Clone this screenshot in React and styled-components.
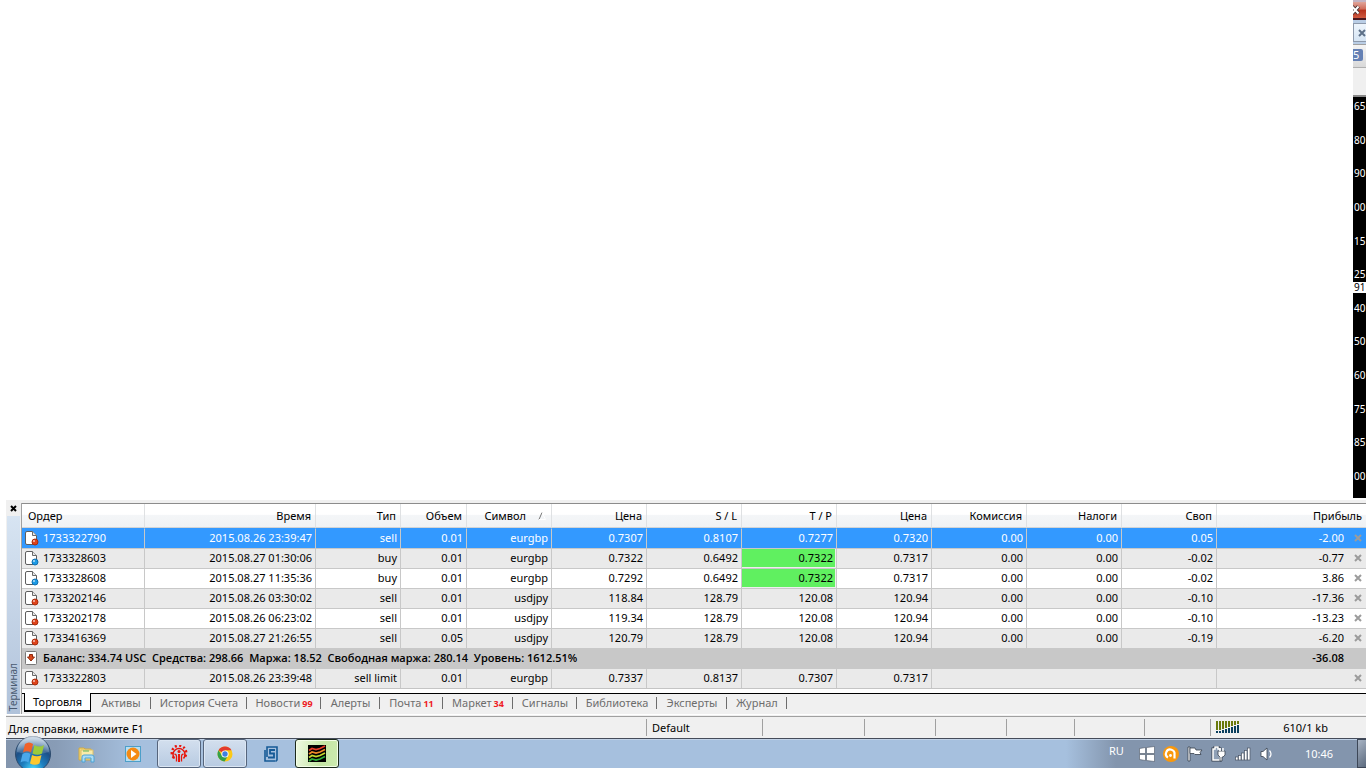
import React, { useState } from "react";
import styled, { createGlobalStyle } from "styled-components";

const columnas = [
  { titulo: "Ордер", ancho: 123 },
  { titulo: "Время", ancho: 171 },
  { titulo: "Тип", ancho: 85 },
  { titulo: "Объем", ancho: 66 },
  { titulo: "Символ", ancho: 85, orden: true },
  { titulo: "Цена", ancho: 95 },
  { titulo: "S / L", ancho: 95 },
  { titulo: "T / P", ancho: 95 },
  { titulo: "Цена", ancho: 95 },
  { titulo: "Комиссия", ancho: 95 },
  { titulo: "Налоги", ancho: 95 },
  { titulo: "Своп", ancho: 95 },
  { titulo: "Прибыль" },
];

const ordenes = [
  ["1733322790", "2015.08.26 23:39:47", "sell", "0.01", "eurgbp", "0.7307", "0.8107", "0.7277", "0.7320", "0.00", "0.00", "0.05", "-2.00"],
  ["1733328603", "2015.08.27 01:30:06", "buy", "0.01", "eurgbp", "0.7322", "0.6492", "0.7322", "0.7317", "0.00", "0.00", "-0.02", "-0.77"],
  ["1733328608", "2015.08.27 11:35:36", "buy", "0.01", "eurgbp", "0.7292", "0.6492", "0.7322", "0.7317", "0.00", "0.00", "-0.02", "3.86"],
  ["1733202146", "2015.08.26 03:30:02", "sell", "0.01", "usdjpy", "118.84", "128.79", "120.08", "120.94", "0.00", "0.00", "-0.10", "-17.36"],
  ["1733202178", "2015.08.26 06:23:02", "sell", "0.01", "usdjpy", "119.34", "128.79", "120.08", "120.94", "0.00", "0.00", "-0.10", "-13.23"],
  ["1733416369", "2015.08.27 21:26:55", "sell", "0.05", "usdjpy", "120.79", "128.79", "120.08", "120.94", "0.00", "0.00", "-0.19", "-6.20"],
];

const pendiente = ["1733322803", "2015.08.26 23:39:48", "sell limit", "0.01", "eurgbp", "0.7337", "0.8137", "0.7307", "0.7317"];

const pestanas = [
  { texto: "Торговля", ancho: 67 },
  { texto: "Активы", ancho: 60 },
  { texto: "История Счета", ancho: 96 },
  { texto: "Новости", ancho: 74, num: 99 },
  { texto: "Алерты", ancho: 59 },
  { texto: "Почта", ancho: 63, num: 11 },
  { texto: "Маркет", ancho: 70, num: 34 },
  { texto: "Сигналы", ancho: 64 },
  { texto: "Библиотека", ancho: 80 },
  { texto: "Эксперты", ancho: 70 },
  { texto: "Журнал", ancho: 60 },
];

const escala = ["65", "80", "90", "00", "15", "25", "40", "50", "60", "75", "85", "00"];

const Cruz = () => (
  <svg width="8" height="8" viewBox="0 0 8 8">
    <path d="M1 1L7 7M7 1L1 7" stroke="currentColor" strokeWidth="2" />
  </svg>
);

const Hoja = ({ tipo }) => (
  <svg width="15" height="16" viewBox="0 0 15 16">
    <path d="M0.5 3Q0.5 1.5 2 1.5H7.5L11.5 5.5V14.5H2Q0.5 14.5 0.5 13Z" fill="#fff" stroke="#5e5e5e" />
    <path d="M7.5 1.5V5.5H11.5" fill="#e8e8e8" stroke="#6a6a6a" />
    <circle cx="10" cy="12" r="3" fill={tipo === "buy" ? "#1c9be6" : "#e0431a"} stroke={tipo === "buy" ? "#1070b0" : "#a82c0c"} />
    <circle cx="9" cy="11" r="1" fill="#fff" opacity="0.7" />
  </svg>
);

const Fila = ({ datos, par, sel }) => (
  <Tr $par={par} $sel={sel}>
    {datos.map((v, i) => {
      if (i === 0) {
        return (
          <Td key={i} $izq>
            <Orden>
              <Hoja tipo={datos[2]} />
              {v}
            </Orden>
          </Td>
        );
      }
      if (i === 12) {
        return (
          <Td key={i} $fin>
            <Beneficio>
              {v}
              <Cerrar type="button" aria-label="Закрыть">
                <Cruz />
              </Cerrar>
            </Beneficio>
          </Td>
        );
      }
      return (
        <Td key={i} $verde={i === 7 && v === "0.7322"}>
          {v}
        </Td>
      );
    })}
    {datos.length < 12 && (
      <>
        <Td colSpan={3} />
        <Td $fin>
          <Beneficio>
            <Cerrar type="button" aria-label="Удалить">
              <Cruz />
            </Cerrar>
          </Beneficio>
        </Td>
      </>
    )}
  </Tr>
);

const App = () => {
  const [activa, setActiva] = useState(0);

  return (
    <Pagina>
      <Global />
      <Superior>
        <Borde>
          <Rojo type="button" aria-label="Закрыть окно">
            <svg width="8" height="10" viewBox="0 0 8 10">
              <path d="M-1 1.5L5.5 8.5M5.5 1.5L-1 8.5" stroke="#4a3434" strokeWidth="4" />
              <path d="M-1 1.5L5.5 8.5M5.5 1.5L-1 8.5" stroke="#fff" strokeWidth="2" />
            </svg>
          </Rojo>
          <Azul type="button" aria-label="Закрыть график">
            <Cruz />
          </Azul>
          <Herramienta>
            <Etiqueta>5</Etiqueta>
          </Herramienta>
          <Hueco />
          <Escala>
            {escala.map((v, i) => (
              <span key={i}>{v}</span>
            ))}
            <Actual>91</Actual>
          </Escala>
        </Borde>
      </Superior>

      <Terminal>
        <Lateral>
          <CerrarPanel type="button" aria-label="Закрыть панель">
            <svg width="7" height="7" viewBox="0 0 7 7">
              <path d="M1 1L6 6M6 1L1 6" stroke="#000" strokeWidth="2" />
            </svg>
          </CerrarPanel>
          <Titulo>
            <span>Терминал</span>
          </Titulo>
        </Lateral>
        <Panel>
          <Tabla>
            <colgroup>
              {columnas.map((c, i) => (
                <Col key={i} $ancho={c.ancho} />
              ))}
            </colgroup>
            <thead>
              <tr>
                {columnas.map((c, i) => (
                  <Th key={i} $izq={i === 0} $fin={i === 12} $orden={c.orden}>
                    {c.titulo}
                    {c.orden && (
                      <svg width="8" height="8" viewBox="0 0 8 8">
                        <path d="M1 7.5L4 0.5" stroke="#777" fill="none" />
                        <path d="M4 0.5L7.5 7.5H1" stroke="#fff" fill="none" />
                      </svg>
                    )}
                  </Th>
                ))}
              </tr>
            </thead>
            <tbody>
              {ordenes.map((d, i) => (
                <Fila key={d[0]} datos={d} par={i % 2 === 1} sel={i === 0} />
              ))}
              <Resumen>
                <Td colSpan={12} $izq $fin>
                  <Orden>
                    <svg width="15" height="14" viewBox="0 0 15 14">
                      <rect x="0.5" y="0.5" width="11" height="13" rx="1" fill="#fff" stroke="#777" />
                      <path d="M4.5 3.5H7.5V6H9.5L6 10L2.5 6H4.5Z" fill="#d9481c" stroke="#8f2a0c" />
                    </svg>
                    {"Баланс: 334.74 USC  Средства: 298.66  Маржа: 18.52  Свободная маржа: 280.14  Уровень: 1612.51%"}
                  </Orden>
                </Td>
                <Td $fin>
                  <Total>-36.08</Total>
                </Td>
              </Resumen>
              <Fila datos={pendiente} par />
            </tbody>
          </Tabla>
          <Pestanas>
            {pestanas.map((p, i) => (
              <Pestana key={p.texto} type="button" $ancho={p.ancho} $activa={i === activa} onClick={() => setActiva(i)}>
                {p.texto}
                {p.num && <Num>{p.num}</Num>}
              </Pestana>
            ))}
          </Pestanas>
        </Panel>
      </Terminal>

      <Estado>
        <Ayuda>Для справки, нажмите F1</Ayuda>
        <Celda $ancho={116}>Default</Celda>
        <Celda $ancho={102} />
        <Celda $ancho={71} />
        <Celda $ancho={71} />
        <Celda $ancho={68} />
        <Celda $ancho={70} />
        <Celda $ancho={66} />
        <Celda $ancho={156}>
          <svg width="24" height="13" viewBox="0 0 24 13">
            {[0, 1, 2, 3, 4, 5, 6, 7].map((n) => (
              <g key={n}>
                <rect x={n * 3} y="0" width="2" height={9 - Math.floor(n * 0.9)} fill="#6a7a0c" />
                <rect x={n * 3} y={10 - Math.floor(n * 0.9)} width="2" height={2 + Math.floor(n * 0.9)} fill="#0a3f5e" />
              </g>
            ))}
          </svg>
          <Trafico>610/1 kb</Trafico>
        </Celda>
      </Estado>

      <Barra>
        <Inicio type="button" aria-label="Пуск">
          <svg width="38" height="38" viewBox="0 0 38 38">
            <defs>
              <radialGradient id="orbe" cx="0.5" cy="0.95" r="0.9">
                <stop offset="0" stopColor="#4fe0ff" />
                <stop offset="0.35" stopColor="#1d7fc0" />
                <stop offset="0.7" stopColor="#1d4f86" />
                <stop offset="1" stopColor="#7fa3c4" />
              </radialGradient>
              <linearGradient id="brillo" x1="0" y1="0" x2="0" y2="1">
                <stop offset="0" stopColor="#fff" stopOpacity="0.65" />
                <stop offset="1" stopColor="#fff" stopOpacity="0.1" />
              </linearGradient>
            </defs>
            <circle cx="19" cy="19" r="17.5" fill="url(#orbe)" stroke="#2c4a6c" />
            <path d="M3 17A16 16 0 0 1 35 17Q19 22 3 17Z" fill="url(#brillo)" />
            <path d="M11 9Q15 6 19 9L17 17.5Q13 15 9 17.5Z" fill="#f0622a" />
            <path d="M20.5 10Q25 13 30 10L28 18.5Q23.500 21 18.500 18.5Z" fill="#9ccb3b" />
            <path d="M8.500 19Q12.500 16.500 16.500 19L14.5 27.5Q10.5 25 6.5 27.5Z" fill="#4aa8ea" />
            <path d="M18 20Q23 22.500 27.5 20L25.500 28.5Q21 31 16 28.5Z" fill="#fdc82f" />
          </svg>
        </Inicio>
        <Apps>
          <Programa type="button" aria-label="Проводник">
            <svg width="18" height="18" viewBox="0 0 18 18">
              <path d="M1 3H6L7 4H13V15H1Z" fill="#f2d675" stroke="#d0aa45" />
              <path d="M3 5H15V14H3Z" fill="#f9ebaa" stroke="#dcc06a" />
              <path d="M5 6H11" stroke="#5bb45b" />
              <path d="M4 17V12Q4 10 6 10H14Q16 10 16 12V17H13V13H7V17Z" fill="#a9dcf6" stroke="#4da2d4" />
            </svg>
          </Programa>
          <Programa type="button" aria-label="Проигрыватель">
            <svg width="18" height="18" viewBox="0 0 18 18">
              <rect x="1.500" y="1.500" width="15" height="15" fill="#b7dff2" stroke="#4c9fc9" />
              <circle cx="9" cy="9" r="6.500" fill="#f58a13" />
              <path d="M7 5L12.500 9L7 13Z" fill="#fff" />
            </svg>
          </Programa>
          <Programa type="button" $abierta aria-label="InstaForex">
            <svg width="18" height="18" viewBox="0 0 18 18">
              <g fill="none" stroke="#e8160c">
                <path d="M4.500 13.500A6 6 0 1 1 13.500 13.500" strokeWidth="1.500" />
                <path d="M4 13A7.200 7.200 0 1 1 14 13" strokeWidth="2.500" strokeDasharray="2 2.200" />
                <path d="M9 9V17" strokeWidth="2" />
                <path d="M6.500 16.500V11Q6.500 9.500 4.500 9M11.500 16.500V11Q11.500 9.500 13.500 9" strokeWidth="1.300" />
              </g>
              <circle cx="9" cy="6.500" r="1.500" fill="#e8160c" />
            </svg>
          </Programa>
          <Programa type="button" $abierta aria-label="Chrome">
            <svg width="16" height="16" viewBox="0 0 16 16">
              <circle cx="8" cy="8" r="7.500" fill="#fbc916" />
              <path d="M8 8L1.500 4.300A7.500 7.500 0 0 1 14.500 4.300H8Z" fill="#e33b2e" />
              <path d="M1.500 4.300A7.500 7.500 0 0 0 7.500 15.500L11 9.800L8 8L5 9.700Z" fill="#33a04a" />
              <circle cx="8" cy="8" r="3.600" fill="#fff" />
              <circle cx="8" cy="8" r="2.700" fill="#3f7fe0" />
            </svg>
          </Programa>
          <Programa type="button" aria-label="Сервис">
            <svg width="14" height="16" viewBox="0 0 14 16">
              <path d="M3 11V1H13V14L11.500 15.500M1 4V15H11" fill="none" stroke="#165a96" strokeWidth="1.600" />
              <path d="M11 4H6V7.500H10V11.500H4" fill="none" stroke="#165a96" strokeWidth="1.800" />
            </svg>
          </Programa>
          <Programa type="button" $abierta $verde aria-label="Терминал">
            <svg width="18" height="17" viewBox="0 0 18 17">
              <rect width="18" height="17" fill="#000" />
              <g fill="none" strokeWidth="1.800">
                <path d="M1 5.500L4 3.500L8 4.500L12 3.500L17 1" stroke="#e63c28" />
                <path d="M1 9L4 7L8 8L12 7L17 4.500" stroke="#f08a28" />
                <path d="M1 12.500L4 10.500L8 11.500L12 10.500L17 8" stroke="#c2d82c" />
                <path d="M1 16L4 14L8 15L12 14L17 11.500" stroke="#2fae3c" />
              </g>
            </svg>
          </Programa>
        </Apps>
        <Bandeja>
          <Idioma>RU</Idioma>
          <svg width="16" height="16" viewBox="0 0 16 16">
            <path d="M0.500 2.500L6.500 1.500V7.500H0.500ZM7.500 1.500L15.500 0.500V7.500H7.500ZM0.500 8.500H6.500V14.500L0.500 13.500ZM7.500 8.500H15.500V15.500L7.500 14.500Z" fill="#fff" stroke="#4b5565" strokeWidth="0.600" />
          </svg>
          <svg width="16" height="16" viewBox="0 0 16 16">
            <circle cx="8" cy="8" r="8" fill="#f9980c" />
            <path d="M5 11.500A4.300 4.300 0 1 1 11.500 8.500V12.500" fill="none" stroke="#fff" strokeWidth="2.200" />
            <circle cx="7.500" cy="9.500" r="1.400" fill="#fff" />
          </svg>
          <svg width="16" height="16" viewBox="0 0 16 16">
            <path d="M1 1H3V15H1Z" fill="#fff" stroke="#39414e" strokeWidth="0.800" />
            <path d="M3 2H8L9 4H15L13 6.500L14 8.500H8L7 7.500H3Z" fill="#fff" stroke="#39414e" strokeWidth="0.800" />
          </svg>
          <svg width="16" height="16" viewBox="0 0 16 16">
            <path d="M2 3H4V1H7V3H9V14H2Z" fill="none" stroke="#39414e" strokeWidth="3" />
            <path d="M2 3H4V1H7V3H9V14H2Z" fill="#8fa0b6" stroke="#fff" strokeWidth="1.500" />
            <path d="M7 5H14V9L12 11H11V15H9V11L7 9Z" fill="#fff" stroke="#39414e" strokeWidth="0.800" />
            <path d="M9 2V5M12 2V5" stroke="#fff" strokeWidth="1.500" />
          </svg>
          <svg width="16" height="16" viewBox="0 0 16 16">
            <g fill="#fff" stroke="#4b5565" strokeWidth="0.700">
              <rect x="0.500" y="11" width="2.500" height="3" />
              <rect x="3.500" y="9.500" width="2.500" height="4.500" />
              <rect x="6.500" y="7" width="2.500" height="7" />
              <rect x="9.500" y="4.500" width="2.500" height="9.500" />
              <rect x="12.500" y="2" width="2.500" height="12" />
            </g>
          </svg>
          <svg width="16" height="16" viewBox="0 0 16 16">
            <path d="M2 5.500H4L8 2V14L4 10.500H2Z" fill="#fff" stroke="#39414e" strokeWidth="0.800" />
            <path d="M10.500 4.500Q13.500 8 10.500 11.500" stroke="#fff" fill="none" strokeWidth="1.200" />
          </svg>
          <Hora>10:46</Hora>
          <Escritorio type="button" aria-label="Свернуть все окна" />
        </Bandeja>
      </Barra>
    </Pagina>
  );
};

export default App;

const Global = createGlobalStyle`
  * {
    box-sizing: border-box;
  }
  body {
    margin: 0;
    background-color: #fff;
    overflow: hidden;
  }
  button {
    font: inherit;
    color: inherit;
    border: none;
    padding: 0;
    background: none;
  }
  svg {
    display: block;
    flex: none;
  }
`;

// ventana
const Pagina = styled.div`
  min-height: 100vh;
  display: flex;
  flex-direction: column;
  font-family: "Noto Sans", "Open Sans", sans-serif;
  font-size: 11px;
  line-height: 16px;
  color: #000;
`;

const Superior = styled.div`
  flex: 1;
  display: flex;
  justify-content: flex-end;
  padding-bottom: 2px;
`;

const Borde = styled.div`
  width: 13px;
  display: flex;
  flex-direction: column;
  overflow: hidden;
  background-color: #b9cde5;
`;

const Rojo = styled.button`
  height: 20px;
  border-top: 2px solid #c3b4c4;
  border-bottom: 2px solid #4a1820;
  background: linear-gradient(#e0a59a, #cf6a58 45%, #b5301c 50%, #cf5a40);
`;

const Azul = styled.button`
  height: 19px;
  margin: 3px 0 2px;
  padding-left: 4px;
  border: 1px solid #8d99ab;
  border-right: none;
  background: linear-gradient(#eef5fc, #d5e4f3);
  color: #5d7088;
`;

const Herramienta = styled.div`
  height: 24px;
  padding-top: 4px;
  border-top: 1px solid #a0a0a0;
  border-bottom: 1px solid #b0b0b0;
  background: linear-gradient(#f4f4f4, #d9d9d9);
`;

const Etiqueta = styled.div`
  width: 10px;
  height: 12px;
  line-height: 12px;
  border-radius: 0 2px 2px 0;
  background-color: #6480b4;
  color: #fff;
`;

const Hueco = styled.div`
  height: 29px;
  background-color: #f0f0f0;
  border-bottom: 2px solid #8a8a8a;
`;

const Escala = styled.div`
  flex: 1;
  position: relative;
  display: flex;
  flex-direction: column;
  justify-content: space-between;
  padding: 1px 0 14px 1px;
  background-color: #000;
  color: #fff;
  font-size: 10px;
`;

const Actual = styled.div`
  position: absolute;
  top: 185px;
  left: 0;
  right: 0;
  padding-left: 1px;
  line-height: 11px;
  background-color: #fff;
  color: #000;
`;

// terminal
const Terminal = styled.div`
  margin-left: 6px;
  padding-top: 3px;
  display: flex;
  background-color: #f0f0f0;
`;

const Lateral = styled.div`
  width: 15px;
  display: flex;
  flex-direction: column;
  align-items: flex-start;
`;

const CerrarPanel = styled.button`
  height: 13px;
  padding: 0 4px 2px;
`;

const Titulo = styled.div`
  flex: 1;
  width: 13px;
  margin-left: 1px;
  display: flex;
  align-items: flex-end;
  justify-content: center;
  padding-bottom: 3px;
  background: linear-gradient(#d7e4f2, #b0c2da);
  color: #4a5a70;
  font-size: 10px;

  span {
    writing-mode: vertical-rl;
    transform: rotate(180deg);
    line-height: 13px;
  }
`;

const Panel = styled.div`
  flex: 1;
  min-width: 0;
  border-left: 1px solid #a0a0a0;
`;

const Tabla = styled.table`
  width: 100%;
  table-layout: fixed;
  border-collapse: separate;
  border-spacing: 0;
  border-top: 1px solid #8c8c8c;
  background-color: #fff;
`;

const Col = styled.col`
  width: ${(p) => (p.$ancho ? p.$ancho + "px" : "auto")};
`;

const Th = styled.th`
  height: 24px;
  padding: 0 ${(p) => (p.$orden ? 5 : 4)}px 0 ${(p) => (p.$izq ? 6 : 0)}px;
  font-weight: normal;
  text-align: ${(p) => (p.$izq ? "left" : "right")};
  white-space: nowrap;
  background: linear-gradient(#fff 45%, #f4f6f8 50%, #f0f2f4);
  border-bottom: 1px solid #d2d4d6;
  border-right: ${(p) => (p.$fin ? "none" : "1px solid #dfe1e3")};

  svg {
    display: inline-block;
    margin-left: 12px;
  }
`;

const Tr = styled.tr`
  background-color: ${(p) => (p.$sel ? "#3399ff" : p.$par ? "#eaeaea" : "#fff")};
  color: ${(p) => (p.$sel ? "#fff" : "#000")};
  --linea: ${(p) => (p.$sel ? "#3399ff" : "#c8c8c8")};
`;

const Td = styled.td`
  height: 20px;
  padding: 0 3px 2px;
  line-height: 17px;
  text-align: ${(p) => (p.$izq ? "left" : "right")};
  white-space: nowrap;
  border-top: 1px solid var(--linea);
  border-right: ${(p) => (p.$fin ? "none" : "1px solid #c8c8c8")};
  ${(p) => p.$verde && "background-color: #60f060; box-shadow: inset -1px -1px 0 #eee;"}
`;

const Resumen = styled.tr`
  background-color: #c8c8c8;
  font-family: "Open Sans", "Noto Sans", sans-serif;
  font-weight: 600;
  --linea: #c8c8c8;
`;

const Orden = styled.div`
  display: flex;
  align-items: center;
  gap: 3px;
  white-space: pre;
`;

const Beneficio = styled.div`
  display: flex;
  align-items: center;
  justify-content: flex-end;
  gap: 10px;
`;

const Total = styled.div`
  padding-right: 19px;
`;

const Cerrar = styled.button`
  margin-right: 1px;
  color: #9c9c9c;
`;

// pestañas
const Pestanas = styled.div`
  height: 26px;
  padding-left: 2px;
  display: flex;
  align-items: flex-start;
  background: linear-gradient(#c4c4c4 1px, #fff 1px, #fff 5px, #000 5px, #000 6px, #f0f0f0 6px);
`;

const Pestana = styled.button`
  width: ${(p) => p.$ancho}px;
  height: 19px;
  margin-top: 5px;
  position: relative;
  display: flex;
  align-items: center;
  justify-content: center;
  gap: 2px;
  white-space: nowrap;
  color: ${(p) => (p.$activa ? "#000" : "#6d6d6d")};
  ${(p) => p.$activa && "background-color: #fff; border: solid #000; border-width: 0 1px 2px;"}

  &:not(:first-child)::after {
    content: "";
    position: absolute;
    right: 0;
    top: 4px;
    width: 1px;
    height: 12px;
    background-color: #6d6d6d;
  }
`;

const Num = styled.span`
  padding-top: 3px;
  font-size: 9px;
  font-weight: bold;
  color: #ee1c25;
`;

// barra de estado
const Estado = styled.div`
  height: 24px;
  margin-left: 6px;
  padding-top: 5px;
  display: flex;
  background: linear-gradient(#fff 1px, #f0f0f0 1px, #f0f0f0 2px, #a0a0a0 2px, #a0a0a0 3px, #f0f0f0 3px);
`;

const Ayuda = styled.div`
  flex: 1;
  padding: 2px;
`;

const Celda = styled.div`
  width: ${(p) => p.$ancho}px;
  height: 17px;
  padding-left: 5px;
  display: flex;
  align-items: center;
  justify-content: space-between;
  border-left: 1px solid #a0a0a0;
`;

const Trafico = styled.span`
  padding-right: 38px;
`;

// barra de tareas
const Barra = styled.div`
  height: 30px;
  margin-left: 6px;
  display: flex;
  align-items: center;
  border-top: 1px solid #454c5a;
  box-shadow: inset 0 1px 0 #c2d3e8;
  background: linear-gradient(90deg, #8395ad, #889cb6 50px, #a6c0de 130px, #a6c0de calc(100% - 300px), #8395ad calc(100% - 250px));
`;

const Inicio = styled.button`
  width: 38px;
  height: 38px;
  margin: -6px 0 -6px 8px;
  position: relative;
`;

const Apps = styled.div`
  flex: 1;
  display: flex;
  gap: 2px;
  padding-left: 13px;
`;

const Programa = styled.button`
  width: 44px;
  height: 29px;
  display: flex;
  align-items: center;
  justify-content: center;
  ${(p) =>
    p.$abierta &&
    `
    border: 1px solid ${p.$verde ? "#1c2a1c" : "#56657c"};
    border-radius: 3px;
    box-shadow: inset 0 0 0 1px ${p.$verde ? "#f4ffe8" : "#dbe6f3"};
    background: ${p.$verde ? "linear-gradient(100deg, #f0fae4, #c4e6a4 60%, #cdebb0)" : "linear-gradient(#d3dfee, #b8cbe2)"};
  `}
`;

const Bandeja = styled.div`
  display: flex;
  align-items: center;
  gap: 8px;
  height: 100%;
  color: #fff;
`;

const Idioma = styled.span`
  margin-right: 7px;
  padding-bottom: 6px;
`;

const Hora = styled.span`
  margin: 0 16px 0 22px;
`;

const Escritorio = styled.button`
  width: 9px;
  height: 100%;
  border: 1px solid #3d4757;
  border-right: none;
  background: linear-gradient(135deg, #a8b4c4, #5c6a7e);
`;
